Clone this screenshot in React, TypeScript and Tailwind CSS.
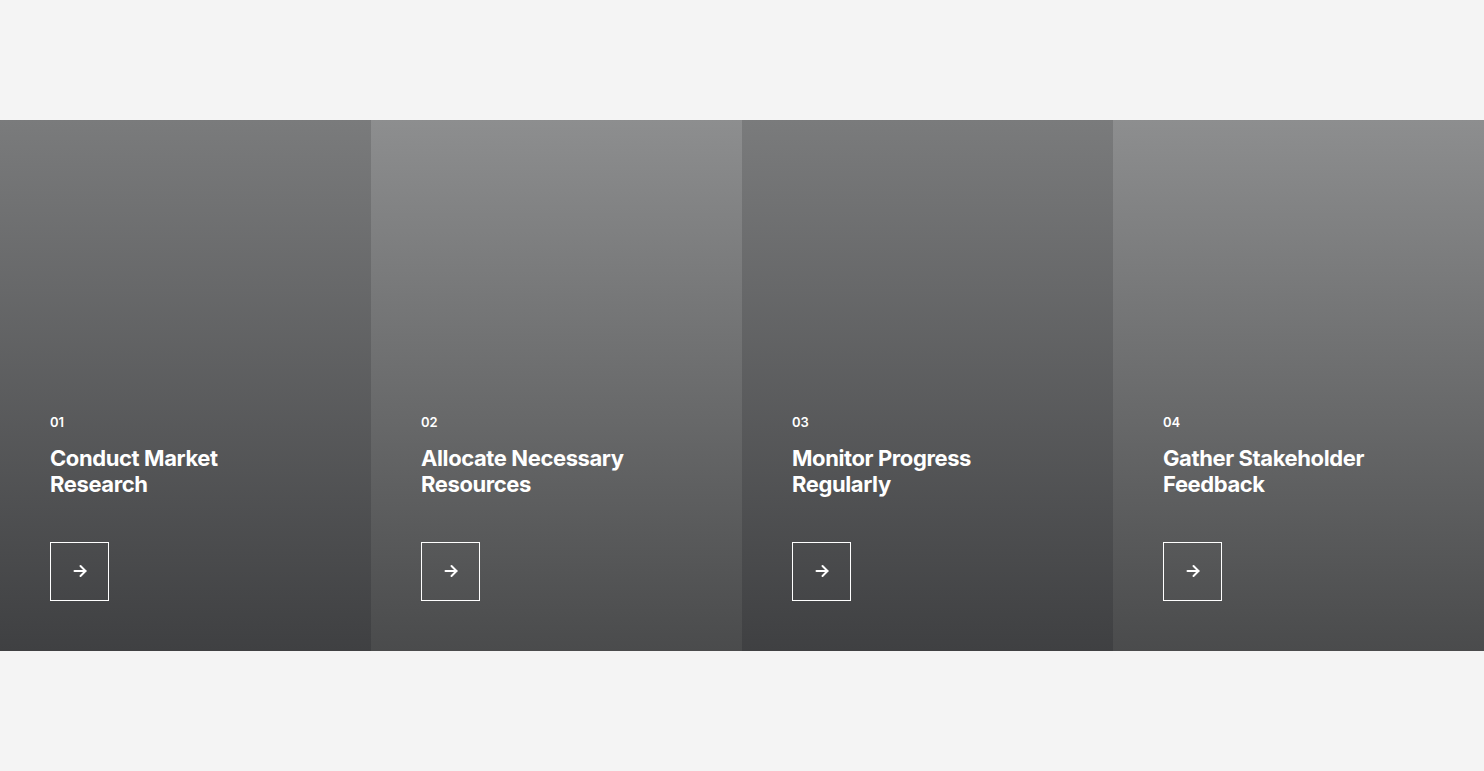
import React from "react";

const cards = [
  { n: "01", t: ["Conduct Market", "Research"], bg: "bg-[linear-gradient(180deg,#7a7b7c_0%,#3f4042_100%)]" },
  { n: "02", t: ["Allocate Necessary", "Resources"], bg: "bg-[linear-gradient(180deg,#8d8e8f_0%,#4a4b4c_100%)]" },
  { n: "03", t: ["Monitor Progress", "Regularly"], bg: "bg-[linear-gradient(180deg,#7a7b7c_0%,#3f4042_100%)]" },
  { n: "04", t: ["Gather Stakeholder", "Feedback"], bg: "bg-[linear-gradient(180deg,#8d8e8f_0%,#4a4b4c_100%)]" },
];

export default function App() {
  return (
    <div className="min-h-[771px] bg-[#f4f4f4] pt-[120px] font-['Inter',sans-serif]">
      <div className="grid grid-cols-4 h-[531px]">
        {cards.map((c) => (
          <div key={c.n} className={`${c.bg} flex flex-col justify-end px-[50px] pb-[50px] text-white`}>
            <div className="text-[13px] font-semibold leading-[16px]">{c.n}</div>
            <div className="mt-[15px] text-[22px] font-bold leading-[26px] tracking-[-0.4px]">
              {c.t[0]}
              <br />
              {c.t[1]}
            </div>
            <div className="mt-[45px] w-[59px] h-[59px] border border-white flex items-center justify-center">
              <svg width="14" height="14" viewBox="0 0 14 14" fill="none" stroke="white" strokeWidth="2" strokeLinecap="round" strokeLinejoin="round" className="-translate-y-[1px]">
                <path d="M1.5 7h11" />
                <path d="M7.5 2l5 5-5 5" />
              </svg>
            </div>
          </div>
        ))}
      </div>
    </div>
  );
}
